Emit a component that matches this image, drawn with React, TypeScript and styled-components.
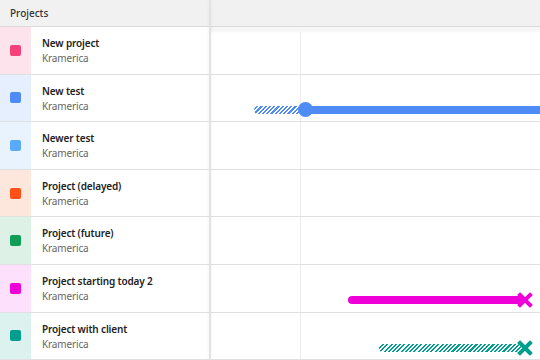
import React from 'react';
import styled, { createGlobalStyle, css } from 'styled-components';

const GlobalStyle = createGlobalStyle`
  html, body {
    margin: 0;
    padding: 0;
    background: #ffffff;
  }
  body {
    font-family: "Noto Sans", "Open Sans", sans-serif;
  }
`;

const ROW_H = 47.6;

type Project = {
  name: string;
  client: string;
  color: string;
  tint: string;
};

const projects: Project[] = [
  { name: 'New project', client: 'Kramerica', color: '#f5407a', tint: '#fde4ec' },
  { name: 'New test', client: 'Kramerica', color: '#4f8bf5', tint: '#e6effd' },
  { name: 'Newer test', client: 'Kramerica', color: '#5aa9fa', tint: '#e8f3fe' },
  { name: 'Project (delayed)', client: 'Kramerica', color: '#fe5018', tint: '#fde7dd' },
  { name: 'Project (future)', client: 'Kramerica', color: '#0f9d58', tint: '#ddf1e6' },
  { name: 'Project starting today 2', client: 'Kramerica', color: '#f000d8', tint: '#fde0fb' },
  { name: 'Project with client', client: 'Kramerica', color: '#009e8e', tint: '#dcf2ef' },
];

const Screen = styled.div`
  width: 540px;
  height: 360px;
  overflow: hidden;
  display: grid;
  grid-template-columns: 209px 2px 1fr;
  background: #ffffff;
`;

const Panel = styled.div`
  display: flex;
  flex-direction: column;
  min-width: 0;
`;

const Divider = styled.div`
  background: #e2e2e2;
  box-shadow: 0 0 4px rgba(0, 0, 0, 0.06);
  z-index: 2;
`;

const HeaderCell = styled.div`
  height: 26px;
  flex: none;
  background: #f1f1f1;
  border-bottom: 1px solid #dadada;
  display: flex;
  align-items: center;
  padding-left: 10px;
  font-size: 10px;
  font-weight: 500;
  color: #333;
`;

const Row = styled.div`
  height: ${ROW_H}px;
  flex: none;
  box-sizing: border-box;
  border-bottom: 1px solid #e0e0e0;
  display: flex;
`;

const Swatch = styled.div<{ $tint: string }>`
  width: 31px;
  flex: none;
  background: ${p => p.$tint};
  display: flex;
  align-items: center;
  justify-content: center;
`;

const Square = styled.span<{ $color: string }>`
  width: 11px;
  height: 11px;
  border-radius: 2px;
  background: ${p => p.$color};
`;

const Info = styled.div`
  padding: 9px 0 0 11px;
  display: flex;
  flex-direction: column;
  white-space: nowrap;
  letter-spacing: -0.15px;
`;

const Name = styled.div`
  font-size: 10px;
  font-weight: 600;
  color: #222;
  line-height: 14px;
`;

const Client = styled.div`
  margin-top: 1px;
  font-size: 10px;
  color: #666;
  line-height: 14px;
`;

const TimelineBody = styled.div`
  flex: 1;
  background:
    linear-gradient(to bottom, #f6f6f6 0, #f6f6f6 4px, rgba(255, 255, 255, 0) 6px),
    linear-gradient(to right, transparent 89px, #ececec 89px, #ececec 90px, transparent 90px);
  display: flex;
  flex-direction: column;
`;

const Track = styled(Row)`
  position: relative;
`;

const hatch = (color: string) => css`
  background: repeating-linear-gradient(
    -45deg,
    ${color} 0,
    ${color} 1.5px,
    rgba(255, 255, 255, 0.9) 1.5px,
    rgba(255, 255, 255, 0.9) 3px
  );
`;

const Bar = styled.div<{ $color: string; $hatched?: boolean; $left: number; $width: number }>`
  position: absolute;
  top: 31px;
  left: ${p => p.$left}px;
  width: ${p => p.$width}px;
  height: 8px;
  border-radius: 4px;
  ${p => (p.$hatched ? hatch(p.$color) : css`background: ${p.$color};`)}
`;

const Knob = styled.div<{ $color: string; $left: number }>`
  position: absolute;
  top: 27.5px;
  left: ${p => p.$left}px;
  width: 15px;
  height: 15px;
  border-radius: 50%;
  background: ${p => p.$color};
`;

const EndMark = styled.svg`
  position: absolute;
  top: 27.5px;
  left: 305.5px;
  width: 16px;
  height: 16px;
`;

const Cross = ({ color }: { color: string }) => (
  <EndMark viewBox="0 0 16 16">
    <path d="M3 3 L13 13 M13 3 L3 13" stroke={color} strokeWidth={4} strokeLinecap="square" fill="none" />
  </EndMark>
);

const App: React.FC = () => {
  return (
    <>
      <GlobalStyle />
      <Screen>
        <Panel>
          <HeaderCell>Projects</HeaderCell>
          {projects.map(p => (
            <Row key={p.name}>
              <Swatch $tint={p.tint}>
                <Square $color={p.color} />
              </Swatch>
              <Info>
                <Name>{p.name}</Name>
                <Client>{p.client}</Client>
              </Info>
            </Row>
          ))}
        </Panel>
        <Divider />
        <Panel>
          <HeaderCell />
          <TimelineBody>
            <Track />
            <Track>
              <Bar $color="#4f8bf5" $hatched $left={43} $width={52} />
              <Bar $color="#4f8bf5" $left={94} $width={260} />
              <Knob $color="#4f8bf5" $left={86.5} />
            </Track>
            <Track />
            <Track />
            <Track />
            <Track>
              <Bar $color="#f000d8" $left={137} $width={174} />
              <Cross color="#f000d8" />
            </Track>
            <Track>
              <Bar $color="#009e8e" $hatched $left={168} $width={142} />
              <Cross color="#009e8e" />
            </Track>
          </TimelineBody>
        </Panel>
      </Screen>
    </>
  );
};

export default App;
